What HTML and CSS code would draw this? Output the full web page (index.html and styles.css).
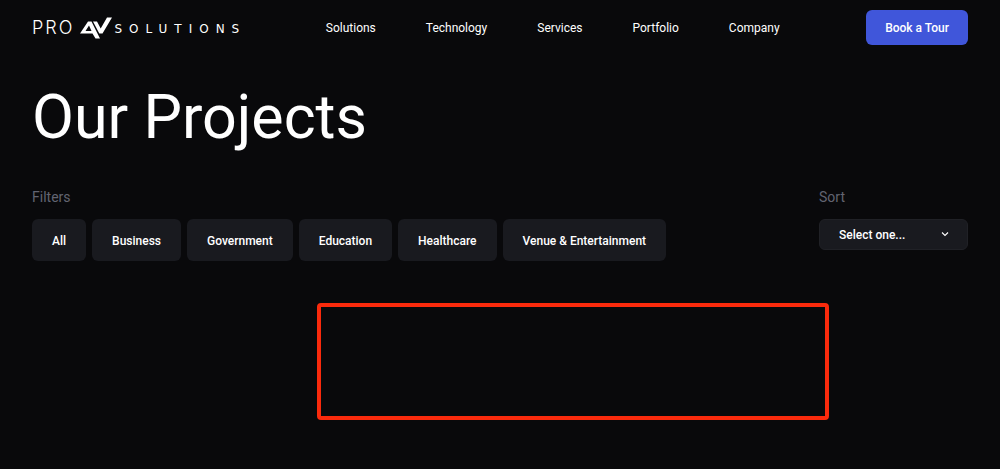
FILE: index.html
```html
<!DOCTYPE html>
<html lang="en">
<head>
<meta charset="utf-8">
<meta name="viewport" content="width=device-width, initial-scale=1">
<title>Our Projects</title>
<link rel="stylesheet" href="styles.css">
</head>
<body>
<header class="header">
  <a class="logo" href="#" aria-label="Pro AV Solutions">
    <span class="logo-pro">PRO</span>
    <svg class="logo-mark" viewBox="0 0 32 22" aria-hidden="true">
      <path fill="#fff" fill-rule="evenodd" d="M0 16.500L8 4.500H11.500L20 21.500H15.500L12.500 16.500ZM9 8.500L5.500 14H11.500ZM13 4.500H17L20.700 11.500L27 0.500H32L22.500 16.500H19.300Z"/>
    </svg>
    <span class="logo-solutions">SOLUTIONS</span>
  </a>
  <nav class="nav">
    <a href="#">Solutions</a>
    <a href="#">Technology</a>
    <a href="#">Services</a>
    <a href="#">Portfolio</a>
    <a href="#">Company</a>
  </nav>
  <button class="book" type="button">Book a Tour</button>
</header>
<main class="main">
  <h1 class="title">Our Projects</h1>
  <div class="controls">
    <section class="filters" aria-labelledby="filters-label">
      <div class="label" id="filters-label">Filters</div>
      <div class="chips">
        <button class="chip" type="button">All</button>
        <button class="chip" type="button">Business</button>
        <button class="chip" type="button">Government</button>
        <button class="chip" type="button">Education</button>
        <button class="chip" type="button">Healthcare</button>
        <button class="chip" type="button">Venue &amp; Entertainment</button>
      </div>
    </section>
    <div class="sort">
      <label class="label" for="sort">Sort</label>
      <div class="select-wrap">
        <select class="select" id="sort"><option>Select one...</option></select>
        <svg class="chevron" viewBox="0 0 8 8" aria-hidden="true"><path d="M1 2.500L4 5.500L7 2.500" fill="none" stroke="#fff" stroke-width="1.100"/></svg>
      </div>
    </div>
  </div>
  <div class="results"></div>
</main>
</body>
</html>
```
FILE: styles.css
```css
* { box-sizing: border-box; }
body {
  margin: 0;
  background: #09090b;
  color: #fff;
  font-family: Roboto, "Liberation Sans", sans-serif;
  font-size: 12px;
  line-height: 16px;
}
a { color: inherit; text-decoration: none; }
button, select { font: inherit; color: inherit; border: 0; }
.header {
  display: flex;
  align-items: center;
  justify-content: space-between;
  padding: 10px 32px 0;
}
.logo { display: flex; align-items: center; font-family: "DejaVu Sans", sans-serif; }
.logo-pro { font-family: Inter, sans-serif; font-size: 18px; font-weight: 300; letter-spacing: 2px; }
.logo-mark { width: 32px; height: 22px; margin-left: 6px; }
.logo-solutions { font-size: 12px; letter-spacing: 7px; margin-right: -7px; padding: 3px 0 0 2px; }
.nav { display: flex; gap: 50px; }
.book {
  height: 35px;
  padding: 0 19px;
  border-radius: 6px;
  background: #4056da;
  font-weight: 500;
}
.main { padding: 0 32px 48px; }
.title {
  margin: 36px 0 34px;
  font-size: 61px;
  line-height: 72px;
  font-weight: 400;
}
.controls { display: flex; justify-content: space-between; gap: 24px; }
.label {
  display: block;
  margin-bottom: 12px;
  font-size: 14px;
  line-height: 20px;
  color: #626471;
}
.chips { display: flex; flex-wrap: wrap; gap: 6px; }
.chip {
  height: 42px;
  padding: 2px 20px 0;
  border-radius: 6px;
  background: #191a1f;
  font-weight: 500;
}
.select-wrap { position: relative; }
.select {
  appearance: none;
  width: 149px;
  height: 31px;
  padding: 0 19px;
  border: 1px solid #202126;
  border-radius: 6px;
  background: #191a1f;
  font-weight: 500;
}
.chevron { position: absolute; right: 19px; top: 11px; width: 8px; height: 8px; pointer-events: none; }
.results {
  width: 512px;
  max-width: 100%;
  height: 117px;
  margin: 42px 139px 0 auto;
  border: 4px solid #fa2a0c;
  border-radius: 4px;
}
```
